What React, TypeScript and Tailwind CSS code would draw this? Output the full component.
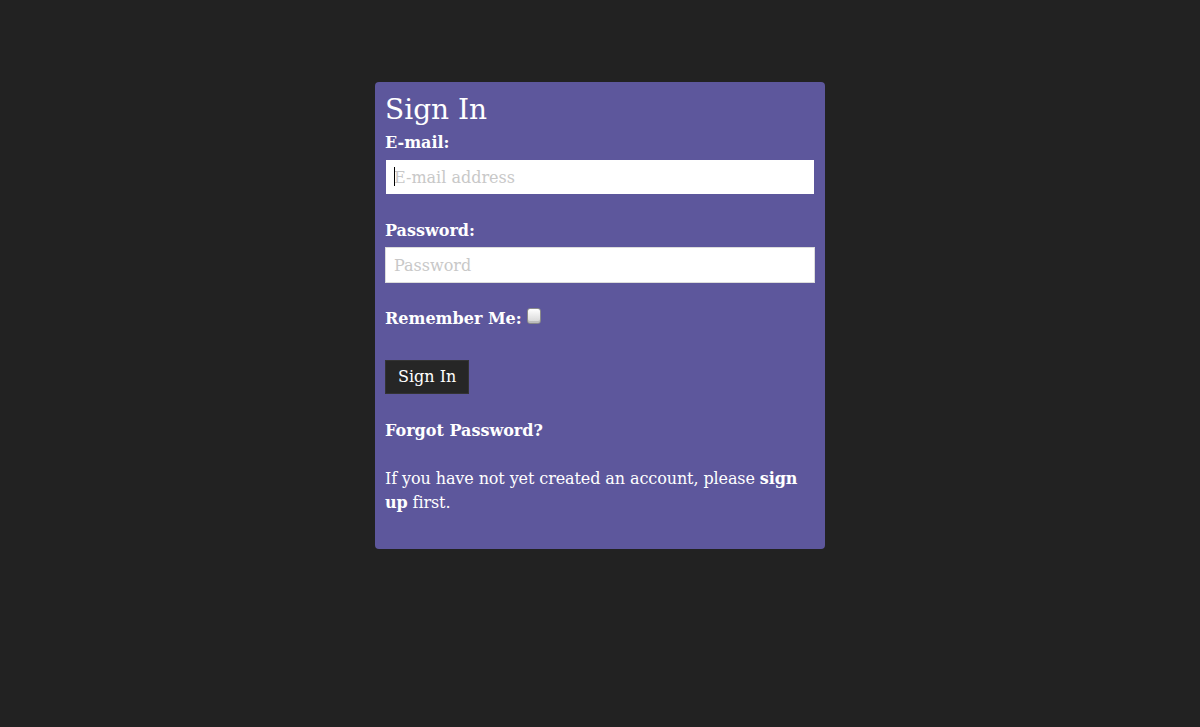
import React from 'react';

const App: React.FC = () => {
  return (
    <div className="min-h-[727px] bg-[#222222] pt-[82px] text-white" style={{ fontFamily: '"DejaVu Serif", serif' }}>
      <div className="mx-auto w-[450px] rounded-[4px] bg-[#5d579c] px-[10px] pt-[10px] pb-[34px]">
        <h2 className="text-[28px] leading-[35px] font-normal">Sign In</h2>

        <label className="block pt-[4px] text-[16px] leading-[24px] font-bold">E-mail:</label>
        <div className="relative mt-[4px]">
          <input
            type="email"
            placeholder="E-mail address"
            className="block h-[36px] w-full border border-[#5d579c] bg-white px-[8px] text-[16px] text-black outline-none placeholder:text-[#c8c8c8]"
          />
          <span className="absolute left-[9px] top-[8px] h-[19px] w-px bg-black"></span>
        </div>

        <label className="mt-[24px] block text-[16px] leading-[24px] font-bold">Password:</label>
        <input
          type="password"
          placeholder="Password"
          className="mt-[4px] block h-[36px] w-full border border-[#dcdcdc] bg-white px-[8px] text-[16px] text-black outline-none placeholder:text-[#c8c8c8]"
        />

        <div className="mt-[24px] flex items-center text-[16px] leading-[24px] font-bold">
          <span>Remember Me:</span>
          <span className="ml-[5px] -mt-[6px] inline-block h-[16px] w-[14px] rounded-[3px] border border-[#8a8a8a] bg-gradient-to-b from-white to-[#d4d4d4] shadow-[inset_0_-2px_0_#bdbdbd]"></span>
        </div>

        <button className="mt-[29px] h-[34px] border border-[#333333] bg-[#262626] px-[12px] text-[16px] text-white">
          Sign In
        </button>

        <p className="mt-[25px] text-[16px] leading-[24px] font-bold">Forgot Password?</p>

        <p className="mt-[24px] text-[16px] leading-[24px] tracking-[-0.1px]">
          If you have not yet created an account, please <b>sign up</b> first.
        </p>
      </div>
    </div>
  );
};

export default App;
